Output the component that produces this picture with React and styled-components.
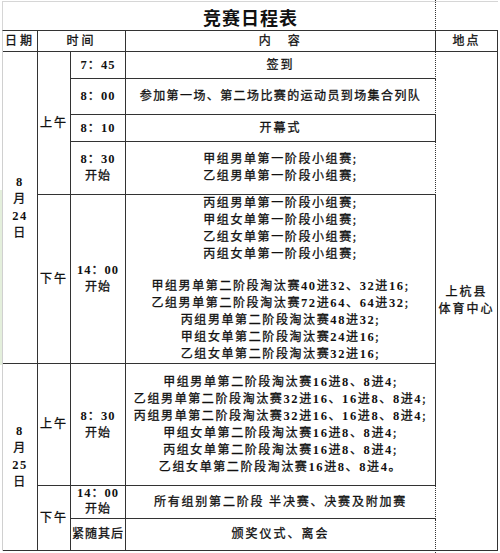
import React from "react";
import styled, { createGlobalStyle } from "styled-components";

const Global = createGlobalStyle`
  html, body { margin: 0; padding: 0; background: #fff; }
  body {
    font-family: "Liberation Serif", "Noto Sans CJK SC", serif;
    color: #161616;
    width: 500px;
    height: 553px;
    overflow: hidden;
  }
`;

const Sheet = styled.div`
  position: relative;
  padding-top: 1px;
  height: 552px;
`;

const TitleBar = styled.div`
  box-sizing: border-box;
  margin-left: 2px;
  width: 496px;
  height: 29px;
  border-top: 1px solid #d6d6d6;
  border-left: 1px solid #d6d6d6;
  display: flex;
  align-items: center;
  justify-content: center;
  font-family: "Noto Sans CJK SC", sans-serif;
  font-weight: 700;
  font-size: 18px;
  letter-spacing: 1px;
  color: #111;
  padding-top: 1px;
`;

const Grid = styled.div`
  box-sizing: border-box;
  margin-left: 2px;
  width: 496px;
  display: grid;
  grid-template-columns: 35px 33px 55px 310px 62px;
  grid-template-rows: 21px 27px 36px 27px 53px 169px 122px 33px 32px;
  border-top: 1px solid #333;
  border-left: 1px solid #d0d0d0;
`;

const Cell = styled.div`
  box-sizing: border-box;
  grid-column: ${(p) => p.$col};
  grid-row: ${(p) => p.$row};
  border-right: 1px ${(p) => (p.$dotted ? "dotted" : "solid")} #333;
  border-bottom: 1px solid #333;
  display: flex;
  flex-direction: column;
  align-items: center;
  justify-content: center;
  text-align: center;
  font-size: 12px;
  line-height: ${(p) => p.$lh || "17px"};
  letter-spacing: ${(p) => p.$ls || "1.6px"};
  white-space: nowrap;
  font-weight: 400;
  color: #111;
  -webkit-text-stroke: 0.3px #111;
`;

const Line = styled.div`
  height: ${(p) => p.$h || "17px"};
`;

const Num = styled.span`
  font-family: "Liberation Serif", serif;
  font-weight: 700;
  font-size: 12.5px;
  -webkit-text-stroke: 0;
`;

const PageBreak = styled.div`
  position: absolute;
  left: 435px;
  top: 0;
  bottom: 0;
  width: 0;
  border-left: 1px dotted #333;
`;

const Gutter = styled.div`
  position: absolute;
  left: 0;
  top: 190px;
  width: 2px;
  height: 175px;
  background: #e4efdc;
`;

// render digits in a serif bold face, CJK in the CJK face
const T = ({ children }) => {
  const parts = String(children).split(/(\d+)/);
  return (
    <span>
      {parts.map((p, i) =>
        /^\d+$/.test(p) ? <Num key={i}>{p}</Num> : <React.Fragment key={i}>{p}</React.Fragment>
      )}
    </span>
  );
};

const Lines = ({ items }) =>
  items.map((t, i) => (
    <Line key={i}>
      <T>{t}</T>
    </Line>
  ));

const aft824 = [
  "丙组男单第一阶段小组赛;",
  "甲组女单第一阶段小组赛;",
  "乙组女单第一阶段小组赛;",
  "丙组女单第一阶段小组赛;",
  "",
  "甲组男单第二阶段淘汰赛40进32、32进16;",
  "乙组男单第二阶段淘汰赛72进64、64进32;",
  "丙组男单第二阶段淘汰赛48进32;",
  "甲组女单第二阶段淘汰赛24进16;",
  "乙组女单第二阶段淘汰赛32进16;",
];

const morn825 = [
  "甲组男单第二阶段淘汰赛16进8、8进4;",
  "乙组男单第二阶段淘汰赛32进16、16进8、8进4;",
  "丙组男单第二阶段淘汰赛32进16、16进8、8进4;",
  "甲组女单第二阶段淘汰赛16进8、8进4;",
  "丙组女单第二阶段淘汰赛16进8、8进4;",
  "乙组女单第二阶段淘汰赛16进8、8进4。",
];

export default function App() {
  return (
    <>
      <Global />
      <Sheet>
        <Gutter />
        <TitleBar>竞赛日程表</TitleBar>
        <Grid>
          <Cell $col="1" $row="1" $ls="3px">日期</Cell>
          <Cell $col="2 / 4" $row="1" $ls="3px">时间</Cell>
          <Cell $col="4" $row="1" $dotted $ls="2.5px">内　容</Cell>
          <Cell $col="5" $row="1" $ls="2px">地点</Cell>

          <Cell $col="1" $row="2 / 7">
            <Lines items={["8", "月", "24", "日"]} />
          </Cell>
          <Cell $col="1" $row="7 / 10">
            <Lines items={["8", "月", "25", "日"]} />
          </Cell>

          <Cell $col="2" $row="2 / 6" $ls="2px">上午</Cell>
          <Cell $col="2" $row="6 / 7" $ls="2px">下午</Cell>
          <Cell $col="2" $row="7 / 8" $ls="2px">上午</Cell>
          <Cell $col="2" $row="8 / 10" $ls="2px">下午</Cell>

          <Cell $col="3" $row="2" $ls="1px"><T>7：45</T></Cell>
          <Cell $col="3" $row="3" $ls="1px"><T>8：00</T></Cell>
          <Cell $col="3" $row="4" $ls="1px"><T>8：10</T></Cell>
          <Cell $col="3" $row="5" $ls="1px">
            <Lines items={["8：30", "开始"]} />
          </Cell>
          <Cell $col="3" $row="6" $ls="1px">
            <Lines items={["14：00", "开始"]} />
          </Cell>
          <Cell $col="3" $row="7" $ls="1px">
            <Lines items={["8：30", "开始"]} />
          </Cell>
          <Cell $col="3" $row="8" $ls="1px" $lh="15px">
            <Lines items={["14：00", "开始"]} />
          </Cell>
          <Cell $col="3" $row="9" $ls="1px">紧随其后</Cell>

          <Cell $col="4" $row="2" $dotted $ls="2px">签到</Cell>
          <Cell $col="4" $row="3" $dotted $ls="1.4px">参加第一场、第二场比赛的运动员到场集合列队</Cell>
          <Cell $col="4" $row="4" $dotted $ls="2px">开幕式</Cell>
          <Cell $col="4" $row="5" $dotted>
            <Lines items={["甲组男单第一阶段小组赛;", "乙组男单第一阶段小组赛;"]} />
          </Cell>
          <Cell $col="4" $row="6" $dotted>
            <Lines items={aft824} />
          </Cell>
          <Cell $col="4" $row="7" $dotted>
            <Lines items={morn825} />
          </Cell>
          <Cell $col="4" $row="8" $dotted $ls="1.8px">所有组别第二阶段 半决赛、决赛及附加赛</Cell>
          <Cell $col="4" $row="9" $dotted $ls="2px">颁奖仪式、离会</Cell>

          <Cell $col="5" $row="2 / 10" $ls="2px">
            <Lines items={["上杭县", "体育中心"]} />
          </Cell>
        </Grid>
        <PageBreak />
      </Sheet>
    </>
  );
}
